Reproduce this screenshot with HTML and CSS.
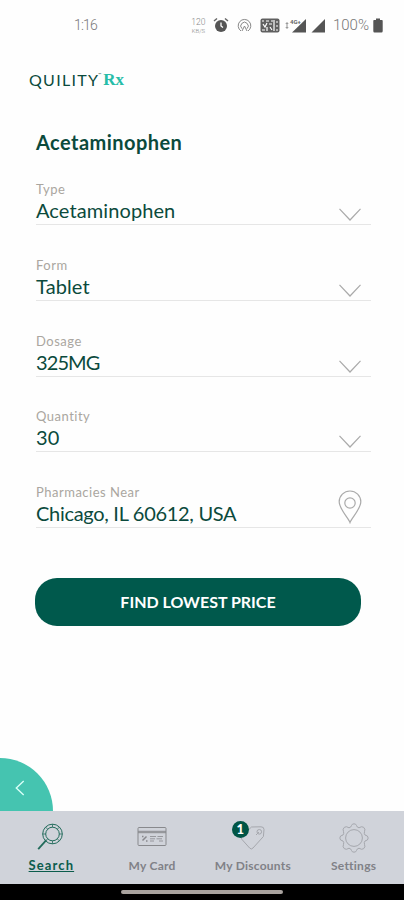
FILE: index.html
```html
<!DOCTYPE html>
<html lang="en">
<head>
  <meta charset="UTF-8" />
  <meta name="viewport" content="width=device-width, initial-scale=1" />
  <title>Quility Rx</title>
  <link rel="stylesheet" href="styles.css">
</head>
<body>
  <div class="status-bar">
    <span class="time">1:16</span>
    <div class="status-icons">
      <div class="net-speed"><span>120</span><span>KB/S</span></div>
      <svg class="alarm" width="16" height="16" viewBox="0 0 16 16">
        <circle cx="8" cy="9" r="6" fill="#555"/>
        <path d="M1 4 L4 1.5 M12 1.5 L15 4" stroke="#666" stroke-width="1.5"/>
        <path d="M8 5.5 V9 L10 10.5" stroke="#fff" stroke-width="1.3" fill="none"/>
      </svg>
      <svg class="hotspot" width="15" height="15" viewBox="0 0 15 15" fill="none" stroke="#888">
        <path d="M4 13 A6.3 6.3 0 1 1 11 13"/>
        <path d="M5 10.7 A3.7 3.7 0 1 1 10 10.7"/>
        <path d="M7.5 8 L5 13 M7.5 8 L10 13"/>
      </svg>
      <svg class="volte" width="20" height="15" viewBox="0 0 20 15">
        <rect x="0.5" y="0.5" width="19" height="14" rx="2" fill="#606060"/>
        <path d="M2 3 H4 M6 3 H9 M11 3 H13 M3 6 L5 9 L7 5 M9 6 H12 M2 12 H5 M7 9 V13 M10 9 L12 12 M14 2 V13 M16 4 H18 M16 8 H18 M16 12 H18" stroke="#fff" stroke-width="1.2" fill="none"/>
      </svg>
      <svg class="signal-data" width="22" height="15" viewBox="0 0 22 15">
        <path d="M2 5 V10 M0.8 6 L2 4.5 L3.2 6 M0.8 9 L2 10.5 L3.2 9" stroke="#777" stroke-width="0.8" fill="none"/>
        <path d="M21 1 V14.5 H7 Z" fill="#555"/>
        <text x="5" y="6" font-size="6" font-weight="700" fill="#666">4G+</text>
      </svg>
      <svg class="signal" width="15" height="15" viewBox="0 0 15 15"><path d="M14 1 V14.5 H0.5 Z" fill="#555"/></svg>
      <span class="battery-text">100%</span>
      <svg class="battery" width="10" height="15" viewBox="0 0 10 15"><path d="M3 0.5 H7 V2 H9 Q9.7 2 9.7 3 V13 Q9.7 14.5 8.5 14.5 H1.5 Q0.3 14.5 0.3 13 V3 Q0.3 2 1 2 H3 Z" fill="#555"/></svg>
    </div>
  </div>

  <header class="logo">
    <span class="logo-name">QUILITY</span><span class="logo-tm">™</span><span class="logo-rx">Rx</span>
  </header>

  <main class="search-form">
    <h1>Acetaminophen</h1>

    <div class="field">
      <div class="field-text">
        <span class="label">Type</span>
        <span class="value">Acetaminophen</span>
      </div>
      <svg class="chevron" width="22" height="13" viewBox="0 0 22 13"><path d="M0.5 0.8 L11 12 L21.5 0.8"/></svg>
    </div>
    <div class="field">
      <div class="field-text">
        <span class="label">Form</span>
        <span class="value">Tablet</span>
      </div>
      <svg class="chevron" width="22" height="13" viewBox="0 0 22 13"><path d="M0.5 0.8 L11 12 L21.5 0.8"/></svg>
    </div>
    <div class="field">
      <div class="field-text">
        <span class="label">Dosage</span>
        <span class="value dosage">325MG</span>
      </div>
      <svg class="chevron" width="22" height="13" viewBox="0 0 22 13"><path d="M0.5 0.8 L11 12 L21.5 0.8"/></svg>
    </div>
    <div class="field">
      <div class="field-text">
        <span class="label">Quantity</span>
        <span class="value">30</span>
      </div>
      <svg class="chevron" width="22" height="13" viewBox="0 0 22 13"><path d="M0.5 0.8 L11 12 L21.5 0.8"/></svg>
    </div>
    <div class="field">
      <div class="field-text">
        <span class="label">Pharmacies Near</span>
        <span class="value place">Chicago, IL 60612, USA</span>
      </div>
      <svg class="pin" width="24" height="34" viewBox="0 0 24 34">
        <path d="M12 32.5 C10.5 28 1.2 19 1.2 11.8 A10.8 10.8 0 0 1 22.8 11.8 C22.8 19 13.5 28 12 32.5 Z"/>
        <circle cx="12" cy="13" r="5.2"/>
      </svg>
    </div>

    <button>FIND LOWEST PRICE</button>
  </main>

  <div class="back-tab">
    <svg width="10" height="16" viewBox="0 0 10 16"><path d="M8.7 1 L1.3 8 L8.7 15"/></svg>
  </div>

  <nav class="tab-bar">
    <a class="tab active">
      <svg width="28" height="28" viewBox="0 0 28 28">
        <circle cx="15.5" cy="11" r="9.8"/>
        <circle cx="15.5" cy="11" r="6.8"/>
        <path d="M15.5 1.2 V4.2 M15.5 17.8 V20.8 M5.7 11 H8.7 M22.3 11 H25.3 M8.6 4.1 L10.7 6.2 M22.4 4.1 L20.3 6.2 M20.3 15.8 L22.4 17.9 M9 17.5 L10.8 15.7" stroke-width="0.8"/>
        <path d="M9.3 17.2 L1.2 26.2" stroke-width="1.8"/>
      </svg>
      <span>Search</span>
    </a>
    <a class="tab">
      <svg width="30" height="28" viewBox="0 0 30 28">
        <rect x="1" y="4.5" width="28" height="18" rx="1"/>
        <path d="M1 8.3 H29 M1 9.7 H29"/>
        <path d="M5.5 17.5 L9.5 13.5 M5 13.5 H6.5 M9 18 H10.5" stroke-width="1.5"/>
        <path d="M13 13.5 H19 M20.5 13.5 H26 M13 15.8 H18 M19.5 15.8 H25 M13 18 H17 M22 18 H26" stroke-width="0.8"/>
      </svg>
      <span>My Card</span>
    </a>
    <a class="tab discounts">
      <div class="tag-wrap">
        <svg width="26" height="28" viewBox="0 0 26 28">
          <path d="M11.5 4 L21 3.8 Q24 3.8 24 6.5 L23.4 13.5 L13 25 Q11.3 27 9.6 25 L2 16.5 Q0.5 14.8 2 13 Z"/>
          <circle cx="19.3" cy="8.8" r="2.3"/>
          <path d="M16 12 L19 9"/>
        </svg>
        <span class="badge">1</span>
      </div>
      <span>My Discounts</span>
    </a>
    <a class="tab settings">
      <svg width="30" height="30" viewBox="0 0 30 30">
        <path d="M12.5 2.5 Q13 0.8 15 0.8 Q17 0.8 17.5 2.5 Q18 4.5 20 4.8 Q22.5 3 24.5 4.2 Q26.8 6 25.5 8.7 Q24.8 10.5 26 12 Q29.2 12.5 29.2 15 Q29.2 17.5 26 18 Q24.8 19.5 25.5 21.3 Q26.8 24 24.5 25.8 Q22.5 27 20 25.2 Q18 25.5 17.5 27.5 Q17 29.2 15 29.2 Q13 29.2 12.5 27.5 Q12 25.5 10 25.2 Q7.5 27 5.5 25.8 Q3.2 24 4.5 21.3 Q5.2 19.5 4 18 Q0.8 17.5 0.8 15 Q0.8 12.5 4 12 Q5.2 10.5 4.5 8.7 Q3.2 6 5.5 4.2 Q7.5 3 10 4.8 Q12 4.5 12.5 2.5 Z"/>
        <circle cx="15" cy="15" r="8.4"/>
      </svg>
      <span>Settings</span>
    </a>
  </nav>
  <div class="home-bar"><div class="handle"></div></div>
</body>
</html>
```

FILE: styles.css
```css
* {
  box-sizing: border-box;
}
body {
  margin: 0;
  height: 900px;
  overflow: hidden;
  display: flex;
  flex-direction: column;
  position: relative;
  background: #fefefe;
  color: #0b4a3c;
  font-family: Lato, sans-serif;
}
.status-bar {
  height: 50px;
  padding: 0 21px 0 74px;
  display: flex;
  align-items: center;
  justify-content: space-between;
  color: #777;
  font-family: Roboto, sans-serif;
  font-weight: 300;
}
.time {
  font-size: 14px;
  letter-spacing: -0.8px;
}
.status-icons {
  display: flex;
  align-items: center;
}
.net-speed {
  display: flex;
  flex-direction: column;
  align-items: center;
  width: 17px;
  font-size: 8.5px;
  line-height: 10px;
  color: #888;
}
.net-speed span + span {
  font-size: 6px;
  line-height: 7px;
}
.alarm {
  margin-left: 6px;
}
.hotspot {
  margin-left: 8px;
}
.volte {
  margin-left: 8px;
}
.signal-data {
  margin-left: 5px;
}
.signal {
  margin-left: 4px;
}
.battery-text {
  margin: 0 4px 0 7px;
  font-size: 15px;
}
.logo {
  height: 60px;
  padding-left: 29px;
  display: flex;
  align-items: center;
}
.logo-name {
  font-size: 16px;
  line-height: 18px;
  margin-bottom: 1px;
  letter-spacing: 1.3px;
}
.logo-tm {
  font-size: 4px;
  align-self: flex-start;
  margin: 22px 0 0 -1px;
}
.logo-rx {
  margin-left: 2px;
  font-family: "Liberation Serif", serif;
  font-size: 17px;
  font-weight: bold;
  color: #27bda8;
}
.search-form {
  flex: 1;
  padding: 20px 33px 0 35px;
}
h1 {
  margin: 0 0 27px 1px;
  font-size: 20px;
  line-height: 24px;
  font-weight: 700;
  letter-spacing: 0.45px;
}
.field {
  display: flex;
  justify-content: space-between;
  height: 44px;
  margin: 0 0 31.8px 1px;
  padding-right: 10px;
  border-bottom: 1px solid #e6e6e6;
}
.field-text {
  display: flex;
  flex-direction: column;
  white-space: nowrap;
}
.label {
  font-size: 13px;
  line-height: 16px;
  letter-spacing: 0.5px;
  color: #aaa6a0;
}
.value {
  font-size: 20px;
  line-height: 27px;
  letter-spacing: 0.1px;
}
.dosage {
  letter-spacing: -0.9px;
}
.place {
  letter-spacing: -0.3px;
}
.chevron, .pin {
  fill: none;
  stroke: #aaa;
  stroke-width: 1.2;
}
.chevron {
  margin-top: 27px;
}
.pin {
  margin: 6px -1px 0 0;
}
button {
  display: block;
  width: 326px;
  height: 48px;
  padding: 0;
  margin-top: 49.5px;
  border: none;
  border-radius: 22px;
  background: #00594c;
  color: #fff;
  font-family: Lato, sans-serif;
  font-size: 16px;
  font-weight: 700;
}
.back-tab {
  position: absolute;
  left: 0;
  bottom: 89px;
  width: 53px;
  height: 53px;
  border-top-right-radius: 53px;
  background: #45c4b0;
  padding: 22px 0 0 15px;
}
.back-tab svg {
  display: block;
  fill: none;
  stroke: #d9fff8;
  stroke-width: 1.4;
}
.tab-bar {
  display: grid;
  grid-template-columns: repeat(4, 1fr);
  height: 73px;
  padding-left: 1px;
  background: #d0d3da;
}
.tab {
  display: flex;
  flex-direction: column;
  align-items: center;
  padding-top: 12px;
  font-size: 12px;
  font-weight: 700;
  line-height: 16px;
  letter-spacing: 0.25px;
  color: #808187;
}
.tab svg {
  display: block;
  height: 28px;
  fill: none;
  stroke: #88898d;
}
.tab > span {
  margin-top: 7px;
}
.tab.active {
  color: #0b5c4c;
  font-size: 13px;
  letter-spacing: 1.1px;
}
.tab.active > span {
  margin-top: 6px;
  text-decoration: underline;
}
.tab.active svg {
  stroke: #226b5b;
}
.tag-wrap {
  position: relative;
}
.tab.discounts svg, .tab.settings svg {
  stroke: #a5a7ad;
}
.tab.settings svg {
  height: 30px;
}
.tab.settings > span {
  margin-top: 5px;
}
.badge {
  position: absolute;
  left: -8px;
  top: -2px;
  width: 17px;
  height: 17px;
  border-radius: 50%;
  background: #005545;
  color: #fff;
  font-size: 13px;
  font-weight: 900;
  line-height: 17px;
  letter-spacing: 0;
  text-align: center;
}
.home-bar {
  height: 16px;
  display: flex;
  align-items: center;
  justify-content: center;
  background: #000;
}
.handle {
  width: 162px;
  height: 4px;
  border-radius: 2px;
  background: #a9a39f;
}
```
